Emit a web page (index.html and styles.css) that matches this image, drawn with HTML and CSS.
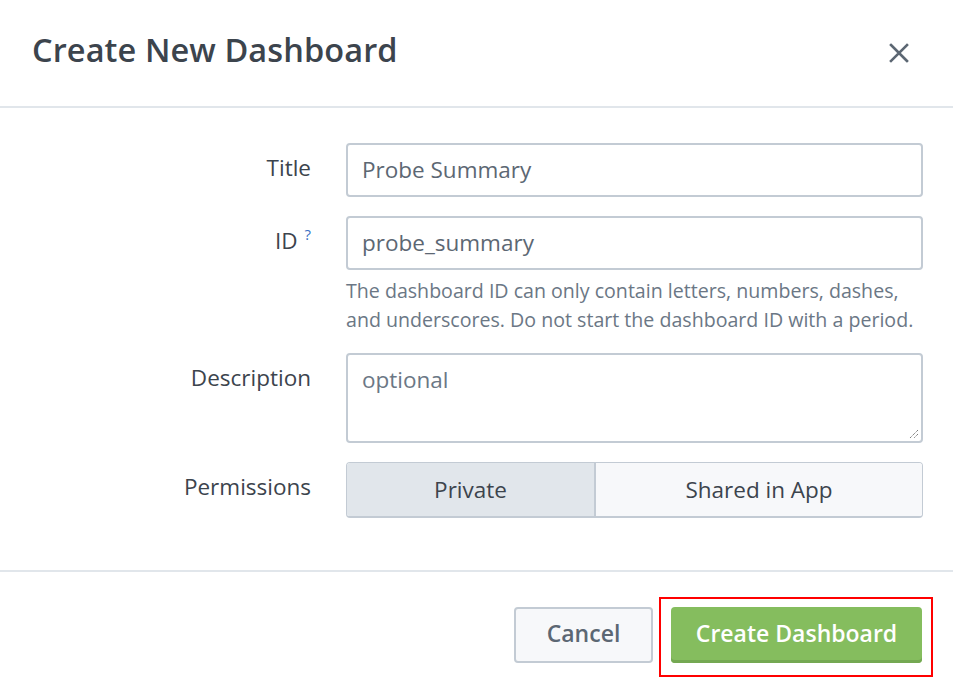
FILE: index.html
```html
<!DOCTYPE html>
<html>
<head>
<meta charset="utf-8">
<link rel="stylesheet" href="styles.css">
</head>
<body>
<div class="modal">
  <div class="header">
    <h1 class="title">Create New Dashboard</h1>
    <button class="close" aria-label="Close">
      <svg width="20" height="20" viewBox="0 0 20 20"><path d="M2 2L18 18M18 2L2 18" stroke="#5c6773" stroke-width="2.6" stroke-linecap="square"/></svg>
    </button>
  </div>
  <div class="body">
    <div class="form">
      <label class="label">Title</label>
      <div class="field"><div class="input">Probe Summary</div></div>

      <label class="label">ID <span class="help">?</span></label>
      <div class="field">
        <div class="input">probe_summary</div>
        <p class="hint">The dashboard ID can only contain letters, numbers, dashes,<br>and underscores. Do not start the dashboard ID with a period.</p>
      </div>

      <label class="label">Description</label>
      <div class="field">
        <div class="input textarea"><span class="placeholder">optional</span>
          <svg class="grip" width="12" height="12" viewBox="0 0 12 12"><path d="M11 3L3 11M11 7L7 11" stroke="#666" stroke-width="1" stroke-dasharray="1.2 0.8"/></svg>
        </div>
      </div>

      <label class="label">Permissions</label>
      <div class="field">
        <div class="segmented">
          <div class="seg active">Private</div>
          <div class="seg">Shared in App</div>
        </div>
      </div>
    </div>
  </div>
  <div class="footer">
    <button class="btn cancel">Cancel</button>
    <span class="highlight"><button class="btn primary">Create Dashboard</button></span>
  </div>
</div>
</body>
</html>
```

FILE: styles.css
```css
* { box-sizing: border-box; }
html, body { margin: 0; padding: 0; background: #fff; }
body {
  font-family: "Open Sans", "Liberation Sans", sans-serif;
  color: #3c444d;
  width: 953px;
  height: 697px;
  overflow: hidden;
}
.header {
  height: 108px;
  border-bottom: 2px solid #e1e6eb;
  display: flex;
  align-items: center;
  justify-content: space-between;
  padding: 0 44px 0 32px;
}
.title {
  margin: 0;
  margin-top: -8px;
  font-size: 32.5px;
  font-weight: 600;
  color: #3c444d;
  letter-spacing: 0.1px;
}
.close {
  border: 0;
  background: none;
  padding: 0;
  width: 20px;
  height: 20px;
  display: flex;
}
.body {
  padding: 35px 30px 52px 0;
  border-bottom: 2px solid #e1e6eb;
}
.form {
  display: grid;
  grid-template-columns: 311px 1fr;
  column-gap: 35px;
  row-gap: 19px;
}
.label {
  text-align: right;
  font-size: 22.5px;
  line-height: 50px;
  color: #3c444d;
}
.help {
  font-size: 15px;
  vertical-align: top;
  line-height: 36px;
  color: #3a6fc4;
  margin-left: 1px;
}
.input {
  height: 54px;
  border: 2px solid #c3cbd4;
  border-radius: 4px;
  padding: 0 14px;
  font-size: 22.5px;
  line-height: 50px;
  color: #5c6773;
  background: #fff;
}
.textarea {
  height: 90px;
  position: relative;
  line-height: 50px;
}
.placeholder { color: #6b7785; }
.grip {
  position: absolute;
  right: 2px;
  bottom: 2px;
}
.hint {
  margin: 6px 0 0;
  font-size: 19.6px;
  line-height: 29px;
  color: #6b7785;
  white-space: nowrap;
}
.segmented {
  display: flex;
  height: 56px;
  border: 1px solid #c3cbd4;
  border-bottom-width: 2px;
  border-radius: 4px;
  overflow: hidden;
}
.seg {
  flex: 1 1 0;
  display: flex;
  align-items: center;
  justify-content: center;
  font-size: 22.5px;
  color: #3c444d;
  background: #f7f8fa;
}
.seg.active {
  flex: 0 0 249px;
  background: #e1e6eb;
  border-right: 2px solid #c3cbd4;
}
.footer {
  display: flex;
  justify-content: flex-end;
  align-items: flex-start;
  padding: 25px 20px 0 0;
}
.btn {
  font-family: inherit;
  font-size: 23px;
  font-weight: 600;
  height: 56px;
  padding: 0 0 4px;
  border-radius: 4px;
  cursor: pointer;
}
.cancel {
  margin-top: 10px;
  margin-right: 6px;
  width: 139px;
  background: #f7f8fa;
  color: #5c6773;
  border: 2px solid #c3cbd4;
}
.highlight {
  display: inline-block;
  border: 2px solid #f00;
  padding: 8px 9px 12px 10px;
}
.primary {
  display: block;
  width: 251px;
  background: #85bd5e;
  color: #fff;
  border: 0;
  box-shadow: inset 0 -3px 0 #74a852;
}
```
